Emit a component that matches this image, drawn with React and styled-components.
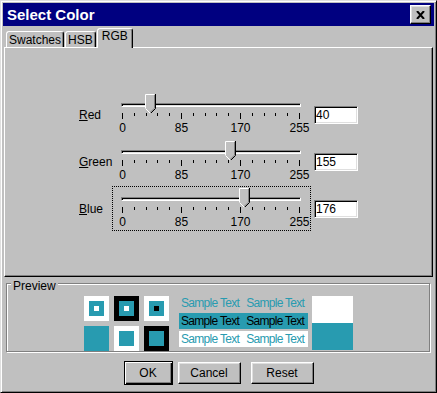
import React from 'react';
import styled, { createGlobalStyle } from 'styled-components';

const TEAL = 'rgb(40, 155, 176)';
const FACE = '#c0c0c0';

const GlobalStyle = createGlobalStyle`
  html, body {
    margin: 0;
    padding: 0;
  }
  body {
    background: ${FACE};
    font-family: "Liberation Sans", Arial, sans-serif;
    font-size: 12px;
    color: #000;
  }
`;

const Window = styled.div`
  width: 437px;
  height: 393px;
  box-sizing: border-box;
  display: flex;
  flex-direction: column;
  background: ${FACE};
  border: 1px solid;
  border-color: #dfdfdf #000 #000 #dfdfdf;
  box-shadow: inset 1px 1px 0 #fff, inset -1px -1px 0 #808080;
  padding: 2px;
`;

const TitleBar = styled.div`
  flex: none;
  height: 23px;
  display: flex;
  align-items: center;
  justify-content: space-between;
  background: #000080;
  padding: 0 3px 0 4px;
`;

const Title = styled.span`
  color: #fff;
  font-weight: bold;
  font-size: 15px;
`;

const CloseButton = styled.div`
  width: 21px;
  height: 19px;
  box-sizing: border-box;
  display: flex;
  align-items: center;
  justify-content: center;
  background: ${FACE};
  border: 1px solid;
  border-color: #fff #000 #000 #fff;
  box-shadow: inset -1px -1px 0 #808080, inset 1px 1px 0 #dfdfdf;
`;

const Body = styled.div`
  display: flex;
  flex-direction: column;
  padding: 0 1px;
`;

const TabStrip = styled.div`
  position: relative;
  z-index: 1;
  height: 21px;
  display: flex;
  align-items: flex-end;
  padding-left: 2px;
`;

const Tab = styled.div`
  box-sizing: border-box;
  height: ${p => (p.$active ? 20 : 16)}px;
  margin-bottom: ${p => (p.$active ? -1 : 0)}px;
  margin-right: 1px;
  padding: ${p => (p.$active ? '0 4px' : '1px 2px 0')};
  line-height: 14px;
  background: ${FACE};
  border: 1px solid;
  border-bottom: none;
  border-color: #fff #000 transparent #fff;
  border-radius: 3px 3px 0 0;
  box-shadow: inset -1px 0 0 #808080;
`;

const Panel = styled.div`
  height: 230px;
  box-sizing: border-box;
  border: 1px solid;
  border-color: #fff #000 #000 #fff;
  box-shadow: inset -1px -1px 0 #808080;
  padding: 44px 0 0 74px;
  display: flex;
  flex-direction: column;
  gap: 2px;
`;

const SliderRow = styled.div`
  height: 45px;
  display: flex;
  align-items: center;
`;

const FieldLabel = styled.div`
  width: 33px;
  line-height: 14px;
`;

const SliderBox = styled.div`
  position: relative;
  width: 199px;
  height: 45px;
  box-sizing: border-box;
  border: 1px dotted ${p => (p.$focused ? '#000' : 'transparent')};
  display: flex;
  flex-direction: column;
`;

const Track = styled.div`
  margin: 10px 9px 0 8px;
  height: 4px;
  box-sizing: border-box;
  border: 1px solid;
  border-color: #808080 #fff #fff #808080;
  box-shadow: inset 1px 1px 0 #000;
  background: #dfdfdf;
`;

const Thumb = styled.svg`
  position: absolute;
  top: 1px;
`;

const Ticks = styled.div`
  margin: 6px 10px 0 9px;
  height: 7px;
  display: flex;
  justify-content: space-between;
  align-items: flex-start;
`;

const Tick = styled.div`
  width: 1px;
  height: ${p => (p.$long ? 6 : 3)}px;
  background: #000;
`;

const TickLabels = styled.div`
  margin: 1px 10px 0 9px;
  display: flex;
  justify-content: space-between;
  line-height: 14px;
`;

const TickLabel = styled.div`
  width: 1px;
  display: flex;
  justify-content: center;
  white-space: nowrap;
`;

const ValueBox = styled.div`
  margin-left: 3px;
  width: 44px;
  height: 18px;
  box-sizing: border-box;
  background: #fff;
  border: 1px solid;
  border-color: #808080 #fff #fff #808080;
  box-shadow: inset 1px 1px 0 #000, inset -1px -1px 0 #dfdfdf;
  padding-left: 1px;
  line-height: 16px;
`;

const Group = styled.div`
  position: relative;
  margin: 6px 0 0 2px;
  width: 424px;
  height: 69px;
  box-sizing: border-box;
  border: 1px solid #808080;
  box-shadow: 1px 1px 0 #fff, inset 1px 1px 0 #fff;
  padding: 12px 0 0 77px;
  display: flex;
  align-items: flex-start;
`;

const Legend = styled.div`
  position: absolute;
  top: -5px;
  left: 4px;
  padding: 0 2px;
  background: ${FACE};
  line-height: 14px;
`;

const SwatchGrid = styled.div`
  display: grid;
  grid-template-columns: repeat(3, 25px);
  grid-auto-rows: 25px;
  gap: 5px;
`;

const Swatch = styled.div`
  background: ${p => p.$outer};
  display: flex;
  align-items: center;
  justify-content: center;
`;

const SwatchInner = styled.div`
  width: 15px;
  height: 15px;
  background: ${TEAL};
  display: flex;
  align-items: center;
  justify-content: center;
`;

const Dot = styled.div`
  width: 5px;
  height: 5px;
  background: ${p => p.$color};
`;

const SampleColumn = styled.div`
  margin: -1px 0 0 10px;
  width: 129px;
  display: flex;
  flex-direction: column;
  gap: 2px;
`;

const SampleRow = styled.div`
  height: 16px;
  display: flex;
  align-items: center;
  gap: 7px;
  padding-left: 2px;
  background: ${p => p.$bg};
  color: ${p => p.$fg};
  font-size: 12px;
  letter-spacing: -0.7px;
  white-space: nowrap;
`;

const ColorBlock = styled.div`
  margin-left: 4px;
  width: 41px;
  height: 54px;
  display: flex;
  flex-direction: column;
`;

const ColorHalf = styled.div`
  flex: 1;
  background: ${p => p.$color};
`;

const ButtonRow = styled.div`
  margin-top: 9px;
  height: 24px;
  display: flex;
  align-items: center;
  justify-content: center;
`;

const Button = styled.div`
  width: ${p => p.$w}px;
  height: ${p => (p.$default ? 24 : 22)}px;
  margin-right: ${p => p.$gap || 0}px;
  box-sizing: border-box;
  display: flex;
  align-items: center;
  justify-content: center;
  background: ${FACE};
  border: 1px solid;
  border-color: ${p => (p.$default ? '#000' : '#fff #000 #000 #fff')};
  box-shadow: ${p =>
    p.$default
      ? 'inset 1px 1px 0 #fff, inset -1px -1px 0 #000, inset -2px -2px 0 #808080'
      : 'inset -1px -1px 0 #808080, inset 1px 1px 0 #dfdfdf'};
`;

const channels = [
  { name: 'Red', value: 40 },
  { name: 'Green', value: 155 },
  { name: 'Blue', value: 176, focused: true },
];

const swatches = [
  { outer: '#fff', dot: '#fff' },
  { outer: '#000', dot: '#fff' },
  { outer: '#fff', dot: '#000' },
  { outer: TEAL },
  { outer: '#fff' },
  { outer: '#000' },
];

const ThumbIcon = ({ left }) => (
  <Thumb width="11" height="19" viewBox="0 0 11 19" style={{ left }}>
    <path d="M0 0H10V14L5 19L0 14Z" fill={FACE} />
    <path d="M0.5 14V0.5H9.5" stroke="#fff" fill="none" />
    <path d="M0.5 14.5L5 19" stroke="#fff" fill="none" />
    <path d="M9.5 1V14.2L5 18.5" stroke="#808080" fill="none" />
    <path d="M10.5 0V14.5L5.5 19.5" stroke="#000" fill="none" />
  </Thumb>
);

const Slider = ({ value, focused }) => {
  const left = Math.round(9 + (value / 255) * 177 - 5);
  return (
    <SliderBox $focused={focused}>
      <Track />
      <Ticks>
        {Array.from({ length: 16 }, (_, i) => (
          <Tick key={i} $long={i % 5 === 0} />
        ))}
      </Ticks>
      <TickLabels>
        {['0', '85', '170', '255'].map(t => (
          <TickLabel key={t}>{t}</TickLabel>
        ))}
      </TickLabels>
      <ThumbIcon left={left} />
    </SliderBox>
  );
};

export default function App() {
  return (
    <>
      <GlobalStyle />
      <Window>
        <TitleBar>
          <Title>Select Color</Title>
          <CloseButton>
            <svg width="9" height="8" viewBox="0 0 9 8">
              <path d="M1 0L8 8M8 0L1 8" stroke="#000" strokeWidth="2" />
            </svg>
          </CloseButton>
        </TitleBar>
        <Body>
          <TabStrip>
            <Tab>Swatches</Tab>
            <Tab>HSB</Tab>
            <Tab $active>RGB</Tab>
          </TabStrip>
          <Panel>
            {channels.map(c => (
              <SliderRow key={c.name}>
                <FieldLabel>
                  <u>{c.name[0]}</u>
                  {c.name.slice(1)}
                </FieldLabel>
                <Slider value={c.value} focused={c.focused} />
                <ValueBox>{c.value}</ValueBox>
              </SliderRow>
            ))}
          </Panel>
          <Group>
            <Legend>Preview</Legend>
            <SwatchGrid>
              {swatches.map((s, i) => (
                <Swatch key={i} $outer={s.outer}>
                  <SwatchInner>{s.dot && <Dot $color={s.dot} />}</SwatchInner>
                </Swatch>
              ))}
            </SwatchGrid>
            <SampleColumn>
              <SampleRow $bg="transparent" $fg={TEAL}>
                <span>Sample Text</span>
                <span>Sample Text</span>
              </SampleRow>
              <SampleRow $bg={TEAL} $fg="#000">
                <span>Sample Text</span>
                <span>Sample Text</span>
              </SampleRow>
              <SampleRow $bg="#fff" $fg={TEAL}>
                <span>Sample Text</span>
                <span>Sample Text</span>
              </SampleRow>
            </SampleColumn>
            <ColorBlock>
              <ColorHalf $color="#fff" />
              <ColorHalf $color={TEAL} />
            </ColorBlock>
          </Group>
          <ButtonRow>
            <Button $w={49} $gap={5} $default>OK</Button>
            <Button $w={63} $gap={10}>Cancel</Button>
            <Button $w={63}>Reset</Button>
          </ButtonRow>
        </Body>
      </Window>
    </>
  );
}
